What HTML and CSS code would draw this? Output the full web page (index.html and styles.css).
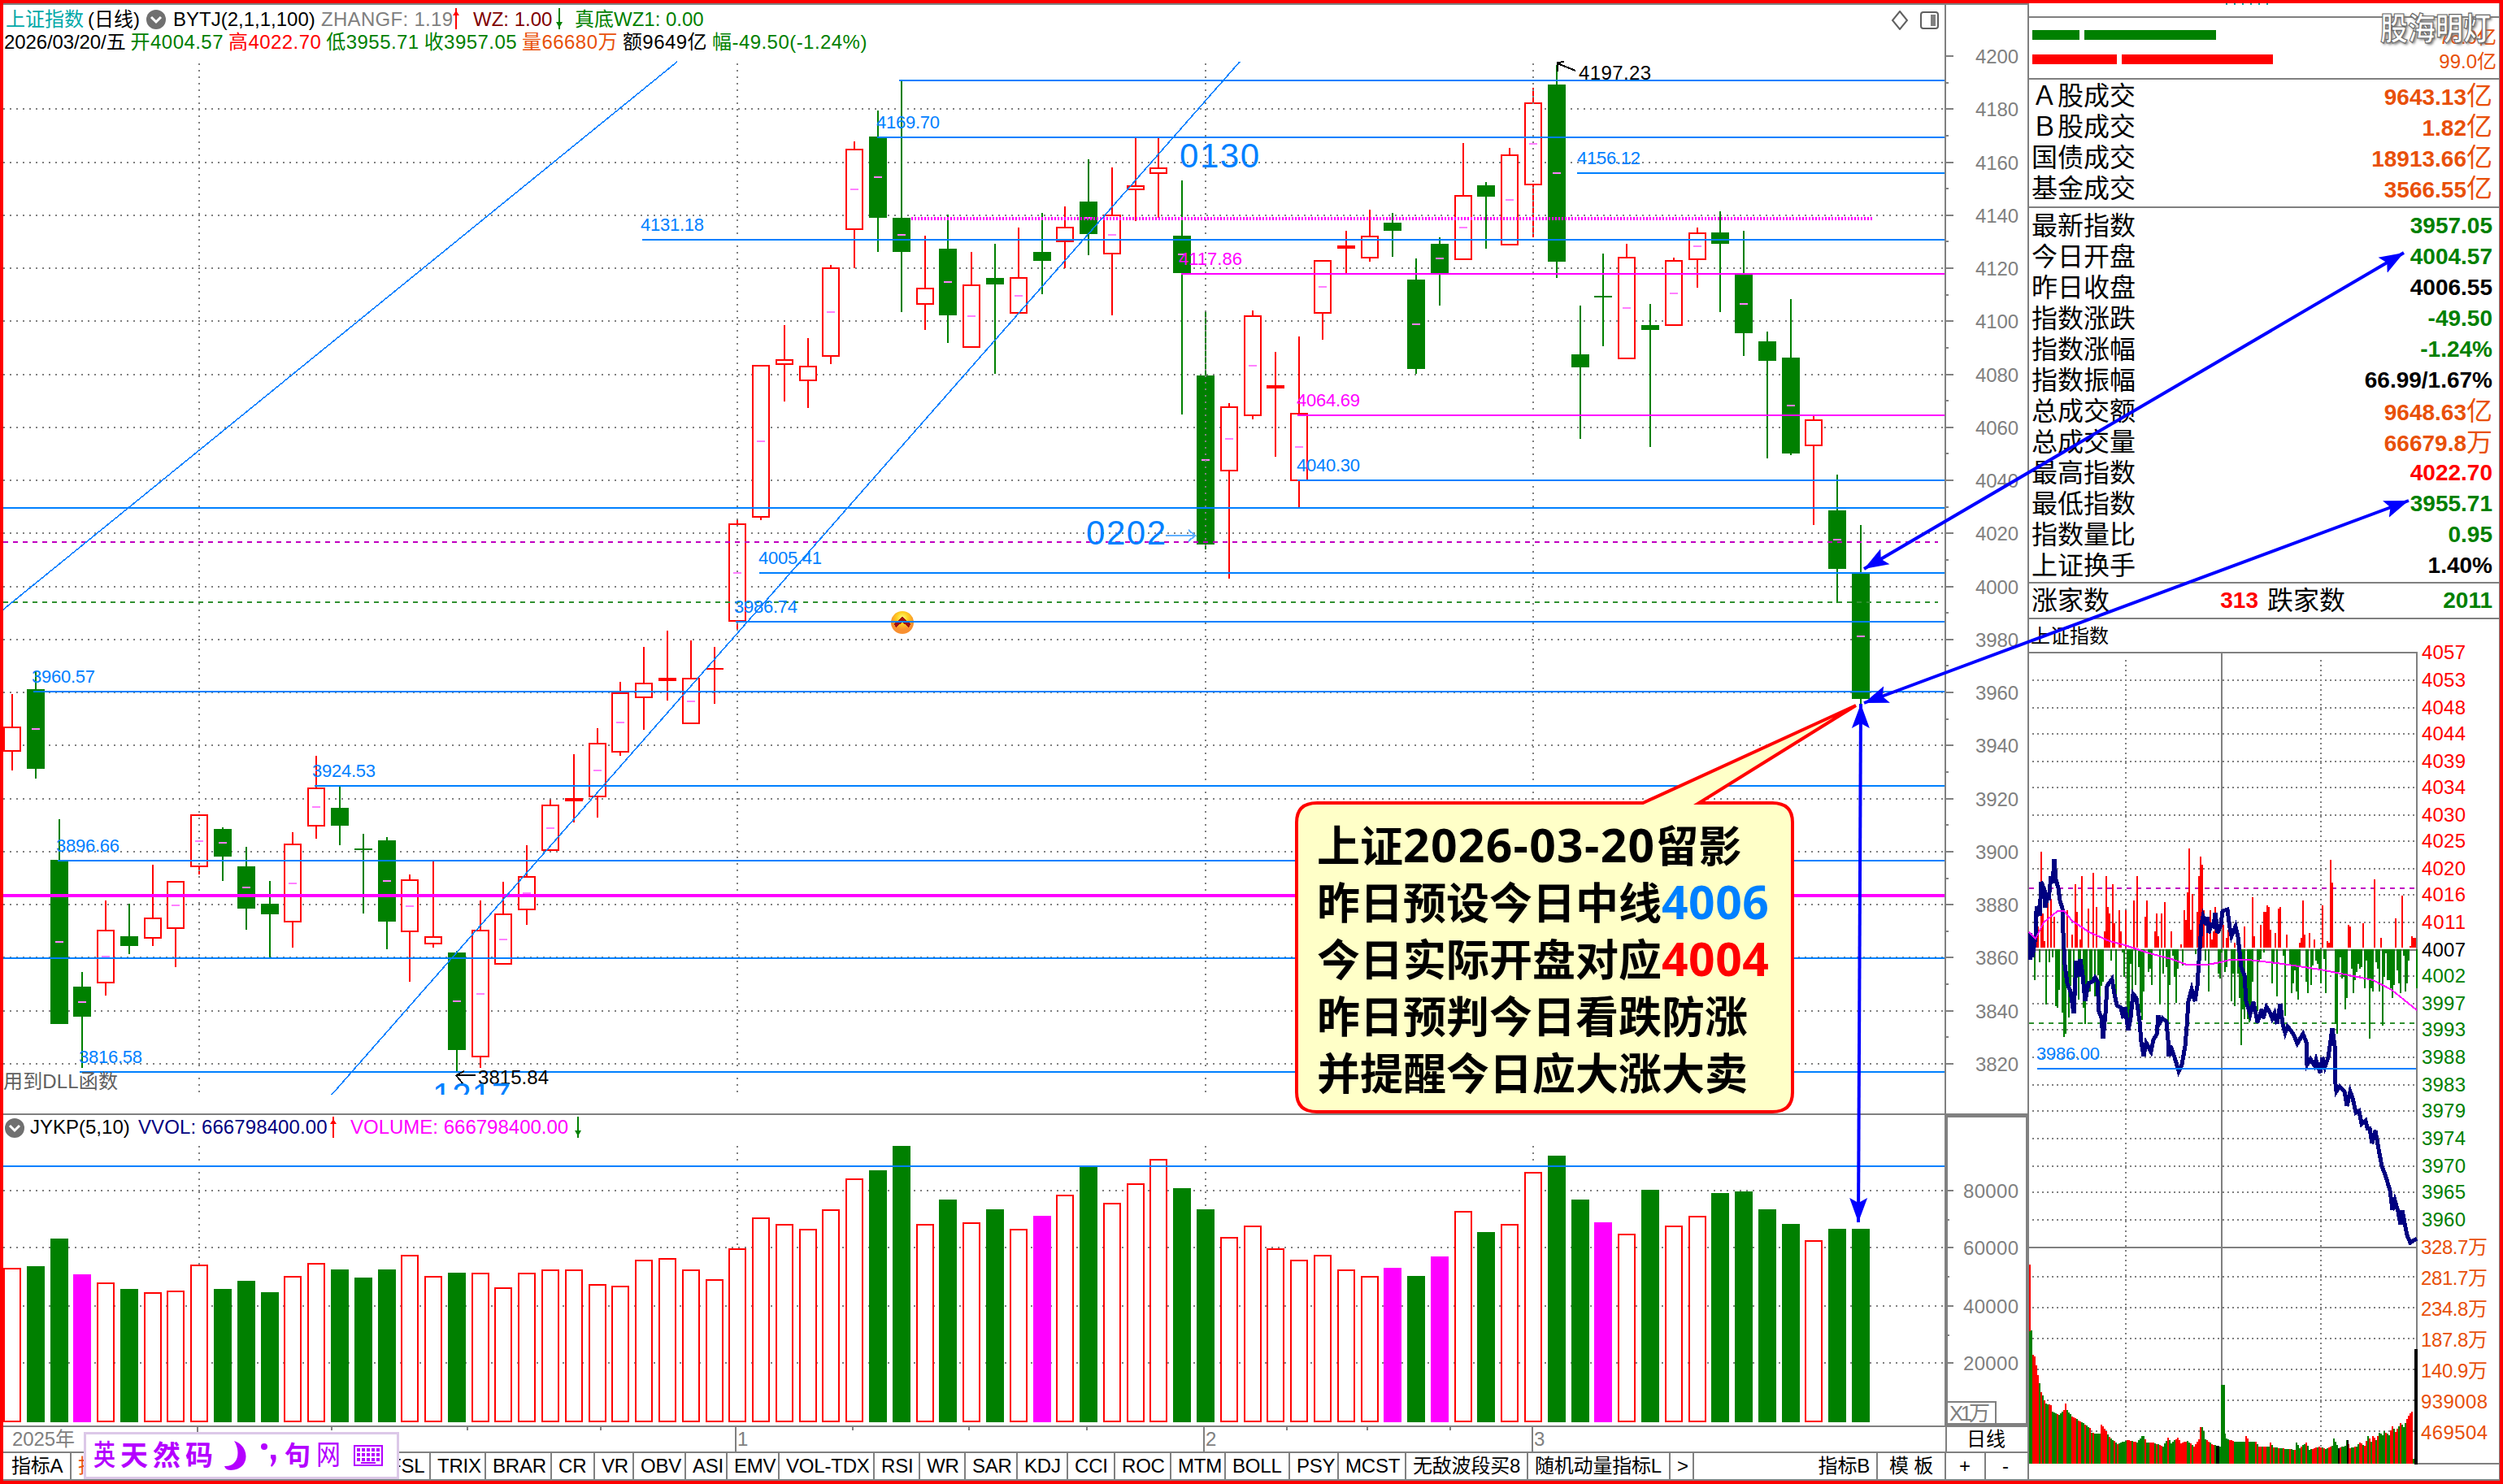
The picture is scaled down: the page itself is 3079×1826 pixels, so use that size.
FILE: index.html
```html
<!DOCTYPE html>
<html lang="zh-CN">

<head>
  <meta charset="UTF-8">
  <title>上证指数 日线</title>
  <link rel="stylesheet" href="styles.css">
</head>

<body>
  <div class="frame">
    <div class="main">
      <section class="kline">
        <div class="info">
          <div class="info-row">
            <span class="teal">上证指数</span><span class="period">(日线)</span>
            <svg class="drop" viewBox="0 0 24 24"><circle cx="12" cy="12" r="12" /><path d="M6 9l6 6 6-6" /></svg>
            <span class="name">BYTJ(2,1,1,100)</span>
            <span class="gray zhangf">ZHANGF: 1.19</span>
            <svg class="arrow up" viewBox="0 0 8 26"><path d="M3 0h2v26H3zM0 9l4-6 4 6z" /></svg>
            <span class="maroon wz">WZ: 1.00</span>
            <svg class="arrow down" viewBox="0 0 8 26"><path d="M3 0h2v26H3zM0 17h8l-4 7z" /></svg>
            <span class="green wz1">真底WZ1: 0.00</span>
            <svg class="tools" viewBox="0 0 60 24">
              <path d="M11 1l9 11-9 11-9-11z" />
              <rect x="37" y="2" width="21" height="20" rx="3" />
              <rect class="solid" x="49" y="5" width="6" height="14" />
            </svg>
          </div>
          <div class="info-row second">
            <span class="date">2026/03/20/五</span>
            <span class="green">开4004.57</span>
            <span class="red">高4022.70</span>
            <span class="green">低3955.71</span>
            <span class="green">收3957.05</span>
            <span class="orange">量66680万</span>
            <span>额9649亿</span>
            <span class="green">幅-49.50(-1.24%)</span>
          </div>
        </div>
        <svg id="kline" class="plot" viewBox="4 66 2491 1304"></svg>
      </section>

      <section class="volume">
        <div class="vol-info">
          <svg class="drop" viewBox="0 0 24 24"><circle cx="12" cy="12" r="12" /><path d="M6 9l6 6 6-6" /></svg>
          <span class="jykp">JYKP(5,10)</span>
          <span class="navy vvol">VVOL: 666798400.00</span>
          <svg class="arrow up" viewBox="0 0 8 26"><path d="M3 0h2v26H3zM0 9l4-6 4 6z" /></svg>
          <span class="magenta vol">VOLUME: 666798400.00</span>
          <svg class="arrow down" viewBox="0 0 8 26"><path d="M3 0h2v26H3zM0 17h8l-4 7z" /></svg>
        </div>
        <svg id="volume" class="plot" viewBox="4 1404 2491 350"></svg>
      </section>

      <section class="timeline">
        <svg id="timeline" class="plot" viewBox="4 1756 2389 30"></svg>
        <div class="cycle">日线</div>
      </section>

      <nav class="tabs">
        <span>指标A</span><span class="orange">指标</span><span></span><span></span><span></span><span></span><span>FSL</span><span>TRIX</span><span>BRAR</span><span>CR</span><span>VR</span><span>OBV</span><span>ASI</span><span>EMV</span><span>VOL-TDX</span><span>RSI</span><span>WR</span><span>SAR</span><span>KDJ</span><span>CCI</span><span>ROC</span><span>MTM</span><span>BOLL</span><span>PSY</span><span>MCST</span><span>无敌波段买8</span><span>随机动量指标L</span><span>&gt;</span><span class="right">指标B</span><span>模 板</span><span>+</span><span>-</span>
      </nav>
    </div>

    <aside class="side">
      <div class="cut"></div>
      <div class="bars">
        <div class="bar-row green-row"><i></i><i></i><b>76.0亿</b></div>
        <div class="bar-row red-row"><i></i><i></i><b>99.0亿</b></div>
      </div>
      <dl class="list turnover">
        <div><dt>Ａ股成交</dt><dd class="orange">9643.13<em>亿</em></dd></div>
        <div><dt>Ｂ股成交</dt><dd class="orange">1.82<em>亿</em></dd></div>
        <div><dt>国债成交</dt><dd class="orange">18913.66<em>亿</em></dd></div>
        <div><dt>基金成交</dt><dd class="orange">3566.55<em>亿</em></dd></div>
      </dl>
      <dl class="list index">
        <div><dt>最新指数</dt><dd class="green">3957.05</dd></div>
        <div><dt>今日开盘</dt><dd class="green">4004.57</dd></div>
        <div><dt>昨日收盘</dt><dd>4006.55</dd></div>
        <div><dt>指数涨跌</dt><dd class="green">-49.50</dd></div>
        <div><dt>指数涨幅</dt><dd class="green">-1.24%</dd></div>
        <div><dt>指数振幅</dt><dd>66.99/1.67%</dd></div>
        <div><dt>总成交额</dt><dd class="orange">9648.63<em>亿</em></dd></div>
        <div><dt>总成交量</dt><dd class="orange">66679.8<em>万</em></dd></div>
        <div><dt>最高指数</dt><dd class="red">4022.70</dd></div>
        <div><dt>最低指数</dt><dd class="green">3955.71</dd></div>
        <div><dt>指数量比</dt><dd class="green">0.95</dd></div>
        <div><dt>上证换手</dt><dd>1.40%</dd></div>
      </dl>
      <div class="count">
        <span>涨家数</span><b class="red">313</b><span>跌家数</span><b class="green">2011</b>
      </div>
      <div class="mini-title">上证指数</div>
      <svg id="minute" class="plot" viewBox="2496 802 579 1018"></svg>
    </aside>

    <div class="watermark">股海明灯</div>

    <svg class="notes" viewBox="0 0 3079 1826">
      <defs>
        <marker id="head" markerUnits="userSpaceOnUse" markerWidth="32" markerHeight="24" refX="30" refY="12"
          orient="auto-start-reverse">
          <path d="M30 12L0 1l6 11-6 11z" fill="#00f" />
        </marker>
      </defs>
      <path class="bubble" d="M2021 988H1620Q1595 988 1595 1012V1344Q1595 1368 1620 1368H2180Q2205 1368 2205 1344V1012Q2205 988 2180 988H2090L2283 868Z" />
      <line x1="2293" y1="700" x2="2957" y2="311" />
      <line x1="2293" y1="865" x2="2963" y2="616" />
      <line x1="2289" y1="866" x2="2286" y2="1504" />
    </svg>

    <div class="callout">
      <p>上证<b class="wide">2026-03-20</b>留影</p>
      <p>昨日预设今日中线<b class="blue">4006</b></p>
      <p>今日实际开盘对应<b class="red">4004</b></p>
      <p>昨日预判今日看跌防涨</p>
      <p>并提醒今日应大涨大卖</p>
    </div>

    <div class="ime">
      <span class="serif">英</span><span class="heavy">天然码</span>
      <svg class="moon" viewBox="0 0 28 36"><path d="M12 0C32 6 32 36 8 36 2 36 1 33 0 31 18 32 20 12 12 0z" /></svg>
      <svg class="punct" viewBox="0 0 20 30"><circle cx="4" cy="4" r="4" /><path d="M12 14h6c2 6-1 12-5 15l-1-2c2-3 3-6 0-9z" /></svg>
      <span class="ju">句</span><span class="net">网</span>
      <svg class="keys" viewBox="0 0 36 26">
        <path d="M1 1h34v24H1z" />
        <path class="dots" d="M4 6h28M4 12h28M4 18h28" />
        <path d="M9 22h18" />
      </svg>
    </div>
  </div>

  <script src="script.js"></script>
</body>

</html>
```

FILE: styles.css
```css
* {
  box-sizing: border-box;
}

body {
  margin: 0;
  background: #fff;
  color: #000;
  font-family: "Liberation Sans", "Noto Sans CJK SC", sans-serif;
  font-size: 24px;
}

.frame {
  position: relative;
  display: flex;
  width: 3079px;
  height: 1826px;
  border: 4px solid #f00;
  overflow: hidden;
}

.main {
  width: 2492px;
  border-right: 2px solid #808080;
  border-top: 2px solid #808080;
  border-bottom: 2px solid #808080;
}

.plot {
  display: block;
  overflow: visible;
}

/* colours */
.teal { color: #00a8a8; }
.gray { color: #808080; }
.maroon { color: #800000; }
.green { color: #008000; }
.red { color: #f00; }
.orange { color: #e8500a; }
.navy { color: #000080; }
.magenta { color: #f0f; }
.blue { color: #0080ff; }

/* k line */
.kline {
  height: 1364px;
}

.info {
  height: 60px;
  padding-top: 4px;
  white-space: nowrap;
}

.info-row {
  display: flex;
  height: 28px;
  line-height: 28px;
  padding-left: 3px;
}

.second {
  padding-left: 0;
  gap: 6px;
  letter-spacing: 0.45px;
}

.second .date {
  margin-left: 1px;
  letter-spacing: -0.1px;
}

.drop {
  width: 24px;
  height: 24px;
  flex: none;
}

.drop circle {
  fill: #707070;
}

.drop path {
  fill: none;
  stroke: #fff;
  stroke-width: 3;
}

.arrow {
  width: 8px;
  height: 26px;
  flex: none;
}

.up { fill: #f00; }
.down { fill: #008000; }

.period { width: 73px; margin-left: 5px; }
.info-row .drop { margin: 2px 9px 0 -1px; }
.name { width: 182px; }
.zhangf { width: 162px; letter-spacing: 0.3px; }
.wz { width: 102px; margin-left: 17px; }
.wz1 { margin-left: 15px; }

.tools {
  width: 60px;
  height: 24px;
  margin: 3px 108px 0 auto;
  fill: none;
  stroke: #606060;
  stroke-width: 2;
}

.tools .solid {
  fill: #808080;
  stroke: none;
}

.kline .plot {
  width: 2491px;
  height: 1304px;
}

/* volume */
.volume {
  height: 386px;
  border-top: 2px solid #808080;
  border-bottom: 2px solid #808080;
}

.vol-info {
  display: flex;
  height: 32px;
  line-height: 30px;
  padding-left: 2px;
}

.vol-info .drop { margin-top: 4px; }
.vol-info .arrow { margin-top: 2px; }
.jykp { width: 133px; margin-left: 7px; }
.vvol { width: 236px; letter-spacing: 0.1px; }
.vol { width: 276px; margin-left: 17px; }

.volume .plot {
  width: 2491px;
  height: 350px;
}

/* time axis */
.timeline {
  display: flex;
  height: 32px;
  border-bottom: 2px solid #808080;
}

.timeline .plot {
  width: 2389px;
  height: 30px;
}

.cycle {
  flex: 1;
  padding-left: 24px;
  border-left: 2px solid #808080;
  line-height: 30px;
}

/* tabs */
.tabs {
  display: grid;
  grid-template-columns: 84px 110px 64px 84px 58px 67px 59px 68px 81px 53px 48px 64px 51px 64px 117px 56px 56px 64px 62px 58px 69px 67px 79px 60px 83px 150px 175px 29px 226px 84px 49px 50px;
  height: 32px;
  line-height: 32px;
  white-space: nowrap;
}

.tabs span {
  padding-left: 8px;
  border-right: 2px solid #808080;
  letter-spacing: -0.2px;
}

.tabs span:first-child { padding-left: 10px; }
.tabs span:last-child { padding-left: 20px; border: 0; }
.tabs span:nth-child(31) { padding-left: 16px; }
.tabs span:nth-child(30) { padding-left: 14px; }

.tabs .right {
  padding-right: 8px;
  text-align: right;
}

/* side panel */
.side {
  width: 579px;
  border-right: 1px solid #808080;
}

.cut {
  height: 18px;
  border-bottom: 2px solid #808080;
  background: repeating-linear-gradient(90deg, #00a8a8 0 2px, transparent 2px 10px) 242px 0 / 60px 2px no-repeat;
}

.bars {
  height: 76px;
  padding: 6px 3px 0 4px;
  border-bottom: 2px solid #808080;
}

.bar-row {
  display: flex;
  align-items: center;
  gap: 6px;
  height: 30px;
}

.bar-row i {
  height: 12px;
}

.bar-row b {
  margin-left: auto;
  color: #e8500a;
  font-weight: 400;
}

.green-row i { width: 58px; background: #008000; }
.green-row i + i { width: 162px; }
.red-row i { width: 104px; background: #f00; }
.red-row i + i { width: 186px; }

.list {
  margin: 0;
  border-bottom: 2px solid #808080;
}

.list div {
  display: flex;
  justify-content: space-between;
  height: 38px;
  line-height: 38px;
  padding: 0 8px 0 3px;
}

.turnover {
  height: 158px;
  padding-top: 1px;
}

.index {
  height: 462px;
  padding-top: 3px;
}

dt {
  font-size: 32px;
}

dd {
  margin: 0;
  font-size: 28px;
  font-weight: 700;
}

dd em {
  font-size: 32px;
  font-style: normal;
  font-weight: 400;
}

.count {
  display: flex;
  height: 44px;
  line-height: 42px;
  padding: 0 8px 0 3px;
  border-bottom: 2px solid #808080;
  font-size: 32px;
}

.count b {
  width: 183px;
  margin-right: 11px;
  font-size: 28px;
  text-align: right;
}

.count b:last-child {
  width: auto;
  margin: 0 0 0 auto;
}

.mini-title {
  height: 40px;
  padding-left: 2px;
  line-height: 42px;
}

.side .plot {
  width: 579px;
  height: 1018px;
}

/* over the charts */
.watermark {
  position: absolute;
  top: 4px;
  right: 11px;
  color: #fff;
  font-size: 34px;
  font-weight: 700;
  line-height: 54px;
  -webkit-text-stroke: 1px #666;
  text-shadow: 2px 2px 3px #777;
  transform: scaleY(1.15);
}

.notes {
  position: absolute;
  top: -4px;
  left: -4px;
  width: 3079px;
  height: 1826px;
}

.notes line {
  stroke: #00f;
  stroke-width: 4;
  marker-start: url(#head);
  marker-end: url(#head);
}

.bubble {
  fill: #ffffc8;
  stroke: #f00;
  stroke-width: 4;
}

.callout {
  position: absolute;
  top: 999px;
  left: 1616px;
}

.callout p {
  height: 70px;
  margin: 0;
  font: bold 53px/70px "Noto Sans CJK SC", sans-serif;
  white-space: nowrap;
}

.callout b {
  font: bold 57px/60px "Open Sans", sans-serif;
  letter-spacing: 0.5px;
}

.callout .wide {
  letter-spacing: 1.3px;
}

.ime {
  position: absolute;
  top: 1758px;
  left: 99px;
  display: flex;
  align-items: center;
  width: 388px;
  height: 58px;
  padding-left: 9px;
  border: 3px solid #dcc8e8;
  background: #fff;
  color: #b400ff;
  line-height: 54px;
}

.ime .serif { font-size: 27px; font-weight: 500; transform: scaleY(1.3); }
.ime .heavy { margin: 0 10px 0 6px; font-size: 34px; font-weight: 700; letter-spacing: 6px; }
.ime .ju { margin-left: 9px; font-size: 32px; font-weight: 700; }
.ime .net { margin-left: 7px; font-size: 30px; transform: scaleY(1.15); }
.ime svg { fill: #b400ff; flex: none; }
.ime .moon { width: 28px; height: 36px; margin-left: -2px; }
.ime .punct { width: 20px; height: 30px; margin-left: 17px; }
.ime .keys { width: 36px; height: 26px; margin-left: 16px; fill: none; stroke: #b400ff; stroke-width: 2; }
.keys .dots { stroke-width: 4; stroke-dasharray: 4 2; }
```

FILE: script.js
```js
const BLUE = '#0080ff', GRAY = '#808080', RED = '#ff0000', GREEN = '#008000', PINK = '#ff00ff';
const colors = { r: RED, g: GREEN, m: PINK, k: '#000' };

// candle: [colour, body top, body bottom, high, low]
const candles = [
  ['r', 894, 925, 854, 948], ['g', 848, 946, 826, 958], ['g', 1058, 1260, 1008, 1260], ['g', 1214, 1251, 1196, 1314],
  ['r', 1144, 1210, 1108, 1225], ['g', 1152, 1164, 1112, 1174], ['r', 1129, 1155, 1064, 1164], ['r', 1084, 1143, 1084, 1190],
  ['r', 1002, 1067, 1002, 1076], ['g', 1020, 1054, 1018, 1084], ['g', 1066, 1118, 1042, 1144], ['g', 1112, 1125, 1084, 1179],
  ['r', 1038, 1135, 1024, 1166], ['r', 969, 1017, 930, 1032], ['g', 994, 1016, 968, 1040], ['g', 1044, 1046, 1026, 1124],
  ['g', 1034, 1134, 1030, 1168], ['r', 1082, 1147, 1076, 1208], ['r', 1152, 1162, 1059, 1166], ['g', 1172, 1292, 1170, 1320],
  ['r', 1144, 1301, 1108, 1314], ['r', 1124, 1187, 1085, 1187], ['r', 1078, 1120, 1040, 1138], ['r', 990, 1047, 984, 1047],
  ['r', 982, 986, 928, 1012], ['r', 914, 981, 896, 1006], ['r', 852, 926, 839, 930], ['r', 840, 859, 796, 898],
  ['r', 834, 838, 776, 862], ['r', 834, 891, 788, 891], ['r', 822, 824, 796, 866], ['r', 644, 765, 640, 775],
  ['r', 449, 637, 449, 640], ['r', 442, 449, 400, 494], ['r', 450, 469, 416, 502], ['r', 329, 439, 326, 448],
  ['r', 183, 283, 174, 330], ['g', 168, 268, 136, 310], ['g', 268, 310, 99, 384], ['r', 354, 375, 290, 406],
  ['g', 306, 388, 264, 422], ['r', 350, 428, 310, 428], ['g', 342, 350, 300, 460], ['r', 341, 386, 280, 386],
  ['g', 310, 321, 262, 362], ['r', 279, 298, 254, 330], ['g', 248, 288, 196, 314], ['r', 264, 313, 206, 388],
  ['r', 228, 234, 169, 272], ['r', 206, 214, 169, 268], ['g', 290, 336, 222, 510], ['g', 462, 670, 383, 676],
  ['r', 500, 580, 496, 712], ['r', 388, 512, 382, 516], ['r', 474, 478, 433, 562], ['r', 508, 592, 414, 625],
  ['r', 320, 386, 320, 418], ['r', 302, 306, 284, 336], ['r', 290, 318, 258, 322], ['g', 274, 284, 262, 316],
  ['g', 344, 454, 318, 460], ['g', 300, 336, 292, 376], ['r', 240, 320, 176, 320], ['g', 228, 242, 224, 306],
  ['r', 190, 302, 182, 302], ['r', 126, 228, 108, 292], ['g', 104, 322, 80, 342], ['g', 436, 452, 376, 540],
  ['g', 364, 366, 312, 426], ['r', 316, 442, 300, 442], ['g', 400, 406, 374, 550], ['r', 320, 401, 317, 401],
  ['r', 286, 320, 280, 354], ['g', 286, 300, 260, 384], ['g', 337, 410, 284, 438], ['g', 420, 444, 408, 564],
  ['g', 440, 558, 368, 560], ['r', 516, 549, 512, 646], ['g', 628, 700, 584, 742], ['g', 705, 860, 646, 867]
];

// top of every volume bar
const volumes = ('r1560 g1558 g1524 m1568 r1578 g1586 r1590 r1588 r1556 g1586 g1576 g1590 r1570 r1554 g1562 g1572 ' +
  'g1562 r1544 r1570 g1566 r1566 r1584 r1566 r1562 r1562 r1580 r1582 r1550 r1548 r1562 r1574 r1536 r1498 r1506 ' +
  'r1512 r1488 r1450 g1440 g1410 r1506 g1476 r1504 g1488 r1512 m1496 r1470 g1435 r1480 r1456 r1426 g1462 g1488 ' +
  'r1522 r1508 r1536 r1550 r1544 r1562 r1570 m1560 g1570 m1546 r1490 g1516 r1506 r1442 g1422 g1476 m1504 r1518 ' +
  'g1464 r1508 r1496 g1468 g1466 g1488 g1506 r1526 g1512 g1512').split(' ');

const rect = (x, y, w, h, fill, extra = '') => `<rect x="${x}" y="${y}" width="${w}" height="${h}" fill="${fill}" ${extra}/>`;
const box = (x, y, w, h, c) => rect(x + 1, y + 1, w - 2, Math.max(h - 2, 1), '#fff', `stroke="${c}" stroke-width="2"`);
const hline = (x1, x2, y, c, w = 2, dash = '') =>
  `<line x1="${x1}" x2="${x2}" y1="${y}" y2="${y}" stroke="${c}" stroke-width="${w}" stroke-dasharray="${dash}"/>`;
const vline = (x, y1, y2, c, w = 2, dash = '') =>
  `<line x1="${x}" x2="${x}" y1="${y1}" y2="${y2}" stroke="${c}" stroke-width="${w}" stroke-dasharray="${dash}"/>`;
const text = (x, y, s, c, size = 24, len = 0) =>
  `<text x="${x}" y="${y}" fill="${c}" font-size="${size}" ${len ? `textLength="${len}"` : ''}>${s}</text>`;
const barX = i => Math.round(15 + i * 28.785) - 11;
const months = [245, 907, 1483, 1886];

function drawKline() {
  let s = '';
  const yOf = p => Math.round(69 + (4200 - p) * 3.263);

  for (let p = 3820; p <= 4180; p += 20) s += hline(4, 2392, yOf(p), GRAY, 2, '2 6');

  candles.forEach(([c, top, bottom, high, low], i) => {
    const x = barX(i), h = bottom - top;
    s += vline(x + 11, high, low, colors[c]);
    s += c === 'g' || h < 5 ? rect(x, top, 22, h, colors[c]) : box(x, top, 22, h, colors[c]);
    if (h > 33) s += hline(x + 6, x + 16, Math.round((top + bottom) / 2), '#ff80ff');
  });

  months.forEach(x => s += vline(x, 78, 1346, GRAY, 2, '2 6'));
  s += hline(4, 2384, 667, '#c000c0', 2, '6 6');
  s += hline(4, 2384, 741, '#309030', 2, '6 6');
  s += hline(1121, 2304, 269, PINK, 4, '2 2');
  s += `<defs><radialGradient id="gold" cy="0.3"><stop offset="0" stop-color="#ffff80"/><stop offset="0.5" stop-color="#ffd020"/><stop offset="1" stop-color="#f89030"/></radialGradient></defs>`;
  s += `<circle cx="1110" cy="766" r="14" fill="url(#gold)" shape-rendering="auto"/><path d="M1101 770l9-8 9 8" fill="none" stroke="#a01010" stroke-width="5"/>`;

  [[1106, 99], [1079, 169], [1940, 213], [790, 295], [1596, 591], [4, 625], [934, 705], [905, 765], [41, 851],
    [387, 967], [71, 1059], [4, 1179], [98, 1319]].forEach(([x, y]) => s += hline(x, 2392, y, BLUE));
  s += hline(1453, 2392, 337, PINK) + hline(1596, 2392, 511, PINK) + hline(4, 2392, 1102, PINK, 4);
  s += `<path d="M4 750L833 76M408 1347L1525 76" stroke="${BLUE}" stroke-width="1.6" fill="none"/>`;

  [['4169.70', 1078, 158], ['4131.18', 788, 284], ['4156.12', 1940, 202], ['4040.30', 1595, 580], ['4005.41', 933, 694],
    ['3986.74', 903, 754], ['3960.57', 39, 840], ['3924.53', 384, 956], ['3896.66', 69, 1048], ['3816.58', 97, 1308]]
    .forEach(([t, x, y]) => s += text(x, y, t, BLUE, 22, 78));
  s += text(1450, 326, '4117.86', PINK, 22, 78) + text(1595, 500, '4064.69', PINK, 22, 78);
  s += text(1942, 98, '4197.23', '#000', 24, 89) + text(588, 1334, '3815.84', '#000', 24, 87);
  s += text(1451, 206, '0130', BLUE, 42, 98) + text(1336, 670, '0202', BLUE, 42, 98);
  s += `<clipPath id="cut"><rect x="520" y="1320" width="120" height="27"/></clipPath>`;
  s += `<g clip-path="url(#cut)">${text(532, 1362, '1217', BLUE, 42, 96)}</g>`;
  s += `<path d="M1434 659h36l-8-7m8 7l-8 7" stroke="#60b0ff" stroke-width="2" fill="none"/>`;
  s += `<path d="M1938 87l-22-9m0 10v-11l8-1M585 1323l-24 0l10-5m-10 5l8 10" stroke="#000" stroke-width="2" fill="none"/>`;
  s += text(4, 1339, '用到DLL函数', '#606060', 24, 141);

  // price axis
  s += vline(2393, 6, 1371, GRAY);
  for (let p = 3820; p <= 4200; p += 20) {
    s += hline(2393, 2403, yOf(p), GRAY) + text(2430, yOf(p) + 9, p, GRAY, 24, 53);
    if (p > 3820) s += hline(2393, 2397, yOf(p - 10), GRAY);
  }
  document.getElementById('kline').innerHTML = s;
}

function drawVolume() {
  let s = '';
  [1465, 1535, 1607, 1677].forEach(y => s += hline(4, 2392, y, GRAY, 2, '2 6'));
  months.forEach(x => s += vline(x, 1410, 1750, GRAY, 2, '2 6'));
  volumes.forEach((v, i) => {
    const top = +v.slice(1), c = colors[v[0]];
    s += v[0] === 'r' ? box(barX(i), top, 22, 1750 - top, c) : rect(barX(i), top, 22, 1750 - top, c);
  });
  s += hline(4, 2392, 1435, BLUE);
  s += `<path d="M2394 1373H2494V1753H2394z" fill="none" stroke="${GRAY}" stroke-width="4"/>`;
  ['80000', '60000', '40000', '20000'].forEach((t, i) => {
    const y = [1465, 1535, 1607, 1677][i];
    s += hline(2393, 2403, y, GRAY) + text(2415, y + 9, t, GRAY, 24, 68);
  });
  [1501, 1571, 1643].forEach(y => s += hline(2393, 2398, y, GRAY));
  s += `<path d="M2396 1725h59v27" fill="none" stroke="${GRAY}" stroke-width="2"/>` + text(2398, 1748, 'X1万', GRAY, 26, 50);
  document.getElementById('volume').innerHTML = s;
}

function drawTimeline() {
  let s = text(15, 1779, '2025年', GRAY, 24, 77);
  [[243, ''], [905, '1'], [1481, '2'], [1885, '3']].forEach(([x, t]) => {
    s += vline(x, 1756, 1786, GRAY) + text(x + 2, 1779, t, GRAY);
  });
  [408, 575, 739, 1049, 1192, 1337, 1583, 1682, 1784].forEach(x => s += vline(x, 1756, 1760, GRAY));
  document.getElementById('timeline').innerHTML = s;
}

// minute, height
const ups = [[4, 38], [5, 26], [7, 118], [8, 42], [9, 8], [11, 56], [13, 60], [15, 38], [23, 46], [26, 16], [28, 78], [29, 44],
  [31, 10], [32, 88], [36, 48], [39, 92], [41, 50], [46, 20], [47, 88], [48, 50], [49, 42], [51, 78], [52, 30], [55, 46], [56, 20],
  [59, 46], [64, 58], [66, 88], [71, 38], [72, 58], [77, 20], [78, 42], [79, 14], [81, 42], [83, 56], [87, 20], [93, 4], [95, 46],
  [96, 34], [97, 68], [98, 122], [99, 22], [100, 66], [103, 44], [104, 88], [105, 112], [106, 102], [107, 46], [109, 18], [111, 46],
  [112, 10], [113, 20], [114, 50], [115, 26], [119, 28], [121, 12], [122, 22], [126, 6], [132, 26], [137, 62], [138, 14], [142, 28],
  [144, 44], [145, 44], [146, 52], [147, 50], [148, 22], [151, 18], [153, 48], [154, 50], [158, 16], [166, 6], [167, 12], [168, 58],
  [169, 16], [172, 18], [175, 10], [180, 52], [183, 8], [184, 6], [185, 108], [186, 80], [196, 28], [197, 26], [205, 30], [212, 84],
  [216, 12], [225, 36], [229, 64], [234, 2], [235, 14], [236, 12], [237, 12]];
const downs = [[1, 12], [3, 38], [6, 16], [10, 68], [12, 16], [14, 10], [16, 70], [17, 72], [18, 50], [20, 78], [21, 108], [22, 104],
  [24, 84], [25, 45], [27, 60], [30, 62], [31, 20], [33, 72], [34, 92], [35, 45], [37, 52], [38, 42], [40, 58], [42, 32], [43, 70],
  [44, 45], [45, 40], [50, 14], [53, 66], [57, 4], [58, 34], [60, 84], [61, 84], [62, 18], [63, 62], [65, 44], [67, 22], [68, 78],
  [69, 87], [70, 52], [73, 28], [74, 24], [75, 44], [80, 68], [82, 30], [84, 22], [85, 92], [86, 44], [88, 8], [89, 34], [90, 66],
  [91, 24], [94, 20], [102, 6], [108, 14], [110, 52], [116, 30], [117, 36], [118, 4], [120, 28], [121, 22], [124, 64], [125, 30],
  [126, 70], [128, 30], [129, 60], [130, 118], [131, 74], [132, 86], [134, 86], [135, 90], [136, 70], [137, 40], [140, 76],
  [141, 16], [142, 12], [144, 4], [149, 42], [150, 16], [152, 58], [156, 8], [157, 82], [160, 18], [161, 54], [162, 42], [163, 26],
  [164, 52], [165, 62], [166, 20], [170, 40], [171, 54], [173, 44], [174, 20], [176, 14], [177, 18], [178, 26], [179, 42], [181, 12],
  [182, 54], [188, 92], [189, 104], [190, 28], [191, 10], [192, 36], [193, 34], [194, 74], [195, 60], [198, 24], [199, 54],
  [200, 38], [201, 28], [202, 18], [203, 24], [204, 22], [206, 48], [207, 14], [208, 36], [209, 110], [210, 48], [211, 52],
  [213, 16], [214, 24], [215, 52], [217, 94], [218, 34], [219, 5], [220, 38], [221, 38], [222, 48], [223, 60], [224, 44], [226, 26],
  [227, 42], [228, 54], [230, 8], [231, 52], [232, 42], [233, 14], [238, 48]];

const price = '2497,1148 2497,1181 2500,1153 2500,1178 2504,1153 2504,1127 2506,1115 2509,1127 2511,1085 2515,1095 2516,1117 ' +
  '2519,1100 2520,1108 2523,1078 2525,1087 2527,1057 2529,1082 2532,1093 2534,1108 2537,1118 2538,1148 2540,1187 2543,1210 ' +
  '2547,1220 2551,1247 2554,1182 2557,1202 2559,1180 2562,1200 2565,1232 2569,1210 2574,1208 2577,1203 2580,1207 2582,1245 ' +
  '2585,1252 2587,1278 2590,1247 2592,1213 2598,1205 2601,1223 2604,1237 2609,1240 2612,1253 2614,1239 2618,1268 2621,1252 ' +
  '2624,1223 2628,1228 2632,1257 2634,1282 2637,1300 2640,1283 2646,1294 2649,1279 2653,1273 2655,1249 2656,1260 2660,1253 ' +
  '2665,1257 2667,1280 2668,1300 2670,1287 2675,1301 2680,1318 2684,1310 2688,1287 2690,1263 2692,1232 2696,1217 2700,1232 ' +
  '2703,1213 2705,1182 2708,1137 2710,1127 2714,1138 2715,1128 2717,1148 2720,1138 2723,1140 2725,1123 2728,1148 2732,1138 ' +
  '2734,1121 2740,1119 2743,1142 2745,1152 2750,1140 2753,1153 2757,1190 2761,1200 2763,1232 2768,1248 2772,1233 2777,1258 ' +
  '2782,1242 2784,1253 2788,1239 2792,1245 2795,1253 2798,1247 2801,1260 2805,1235 2808,1260 2811,1271 2814,1263 2821,1272 ' +
  '2826,1284 2833,1272 2837,1282 2838,1310 2842,1303 2847,1311 2849,1304 2854,1320 2857,1301 2860,1313 2864,1301 2867,1280 ' +
  '2869,1265 2872,1287 2872,1325 2874,1343 2878,1337 2884,1343 2887,1361 2891,1343 2894,1351 2898,1369 2902,1367 2905,1383 ' +
  '2910,1379 2912,1388 2915,1388 2918,1407 2922,1391 2926,1414 2930,1435 2934,1445 2940,1465 2943,1489 2946,1477 2950,1491 ' +
  '2953,1507 2955,1489 2959,1510 2961,1520 2965,1529 2973,1524';
const average = '2496,1147 2504,1155 2514,1135 2531,1121 2539,1121 2549,1133 2570,1147 2595,1158 2614,1163 2644,1173 2671,1180 ' +
  '2690,1187 2715,1187 2732,1184 2743,1181 2766,1181 2808,1186 2854,1193 2900,1202 2919,1206 2942,1218 2957,1230 2973,1243';

// minute volume: heights between key minutes, then colour runs
const volKeys = [[0, 164], [1, 164], [2, 134], [3, 132], [4, 121], [5, 109], [6, 99], [7, 88], [8, 84], [9, 78], [10, 74], [13, 72],
  [14, 64], [18, 60], [21, 66], [22, 74], [23, 66], [26, 58], [32, 51], [37, 44], [38, 38], [41, 37], [43, 37], [44, 48], [46, 43],
  [49, 33], [54, 24], [60, 29], [66, 26], [69, 34], [70, 34], [72, 26], [76, 26], [82, 21], [85, 32], [87, 25], [91, 32], [93, 25],
  [97, 28], [101, 21], [104, 30], [105, 45], [106, 45], [107, 40], [108, 30], [112, 24], [117, 21], [118, 97], [119, 43], [121, 31],
  [126, 27], [132, 27], [133, 34], [135, 27], [139, 27], [141, 21], [147, 21], [148, 26], [150, 20], [159, 18], [163, 17], [164, 26],
  [166, 19], [170, 26], [172, 17], [178, 21], [182, 18], [186, 22], [187, 31], [190, 19], [194, 22], [195, 29], [197, 19], [201, 21],
  [203, 26], [206, 22], [208, 34], [210, 27], [211, 34], [213, 29], [215, 38], [217, 35], [218, 40], [221, 35], [223, 46], [225, 39],
  [228, 50], [230, 45], [232, 55], [234, 62], [235, 64], [236, 6]];
const volRuns = '2g4r1g1r1g1r2g2r3g1r3g2r3g3r1g2r2g1r2g1r1g1r4g4r1g1r2g1r1g1r3g2g3r1g2r5g1r2g3r1g1r1g2r3g1r4g7r2g1r1g5r3g' +
  '2r1g2r1g2k2g1r3g3r7g2r4g1r1g2r1g2r2g1r1g1r2g1r2g1r3g1r2g1r3g1r2g1r3g3r1g2r1g1r2g2r1g3g1k1r4g2r2g1r2g2r1g2r1g1r1g2r' +
  '1g1r4g1r2g2r1g2r1g1r3g4r';

function drawMinute() {
  let s = '';
  const labels = ['4057', '4053', '4048', '4044', '4039', '4034', '4030', '4025', '4020', '4016', '4011', '4007', '4002', '3997',
    '3993', '3988', '3983', '3979', '3974', '3970', '3965', '3960'];
  const ys = [803, 837, 871, 903, 937, 969, 1003, 1035, 1069, 1101, 1135, 1169, 1201, 1235, 1267, 1301, 1335, 1367, 1401, 1435, 1467, 1501];
  labels.forEach((t, i) => {
    if (i && i !== 11) s += hline(2500, 2972, ys[i], GRAY, 2, '2 4');
    s += text(2979, ys[i] + 8, t, i < 11 ? RED : i > 11 ? GREEN : '#000', 24, 54);
  });
  ['328.7万', '281.7万', '234.8万', '187.8万', '140.9万', '939008', '469504'].forEach((t, i) => {
    const y = 1534 + i * 38;
    if (i) s += hline(2500, 2972, y - 1, GRAY, 2, '2 4');
    s += text(2978, y + 9, t, '#e8500a', 24, 82);
  });
  s += vline(2615, 812, 1800, GRAY, 2, '2 4') + vline(2855, 812, 1800, GRAY, 2, '2 4') + vline(2733, 803, 1801, GRAY);
  s += hline(2496, 2974, 803, GRAY) + hline(2496, 2974, 1169, GRAY) + hline(2496, 2974, 1535, GRAY);
  s += vline(2973, 803, 1801, GRAY) + hline(2973, 3075, 1801, GRAY) + hline(2496, 3075, 1821, GRAY);
  s += hline(2496, 2972, 1093, '#c000c0', 2, '6 6') + hline(2496, 2972, 1259, '#309030', 2, '6 6');

  ups.forEach(([i, h]) => s += rect(2496 + i * 2, 1166 - h, 2, h, RED));
  downs.forEach(([i, h]) => s += rect(2496 + i * 2, 1168, 2, h, GREEN));
  s += `<polyline points="${price}" fill="none" stroke="#000080" stroke-width="5"/>`;
  s += `<polyline points="${average}" fill="none" stroke="${PINK}" stroke-width="2"/>`;
  s += hline(2506, 2972, 1315, BLUE) + text(2505, 1304, '3986.00', BLUE, 22, 78);

  const cols = volRuns.replace(/(\d+)([rgk])/g, (m, n, c) => c.repeat(+n));
  for (let i = 0; i < 237; i++) {
    const k = Math.max(volKeys.findIndex(v => v[0] >= i), 1);
    const [a, b] = [volKeys[k - 1], volKeys[k]];
    const h = Math.round(a[1] + (b[1] - a[1]) * (i - a[0]) / (b[0] - a[0]));
    s += rect(2496 + i * 2, 1801 - h, 2, h, colors[cols[i] || 'g']);
  }
  s += rect(2733, 1704, 4, 97, GREEN);
  s += rect(2496, 1556, 2, 82, RED) + rect(2970, 1660, 4, 142, '#000') + rect(2887, 1772, 2, 29, '#000');
  document.getElementById('minute').innerHTML = s;
}

document.querySelectorAll('svg.plot').forEach(el => el.setAttribute('shape-rendering', 'crispEdges'));
drawKline();
drawVolume();
drawTimeline();
drawMinute();
```
